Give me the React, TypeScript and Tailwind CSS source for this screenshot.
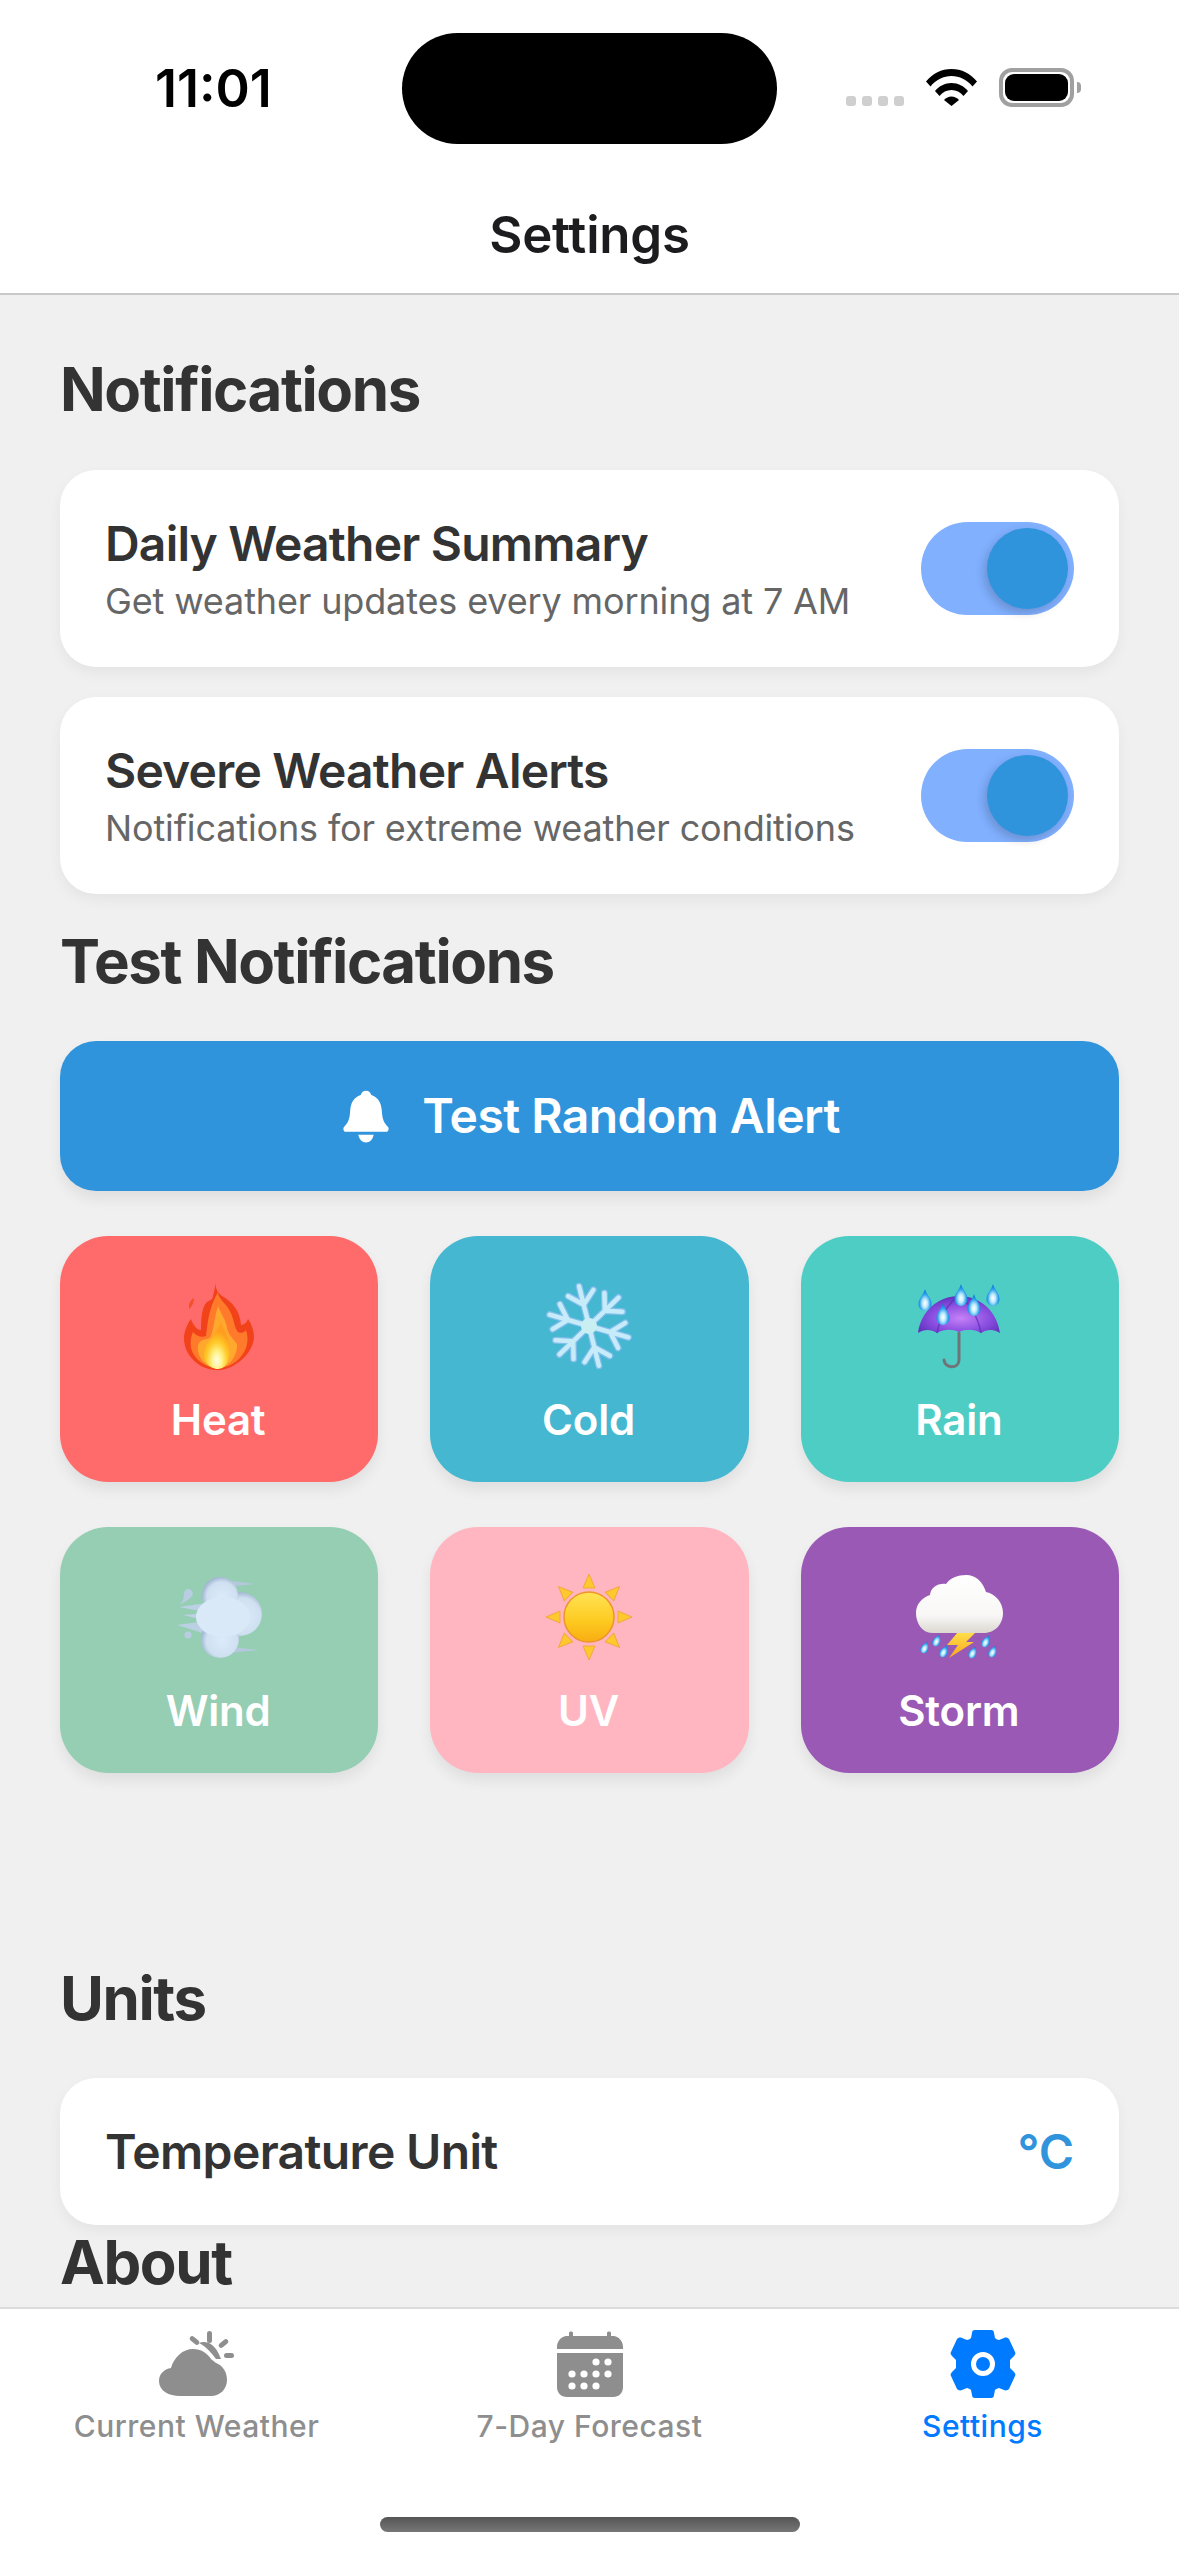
const fontStack = "font-['Inter',sans-serif]";

function Wifi() {
  return (
    <svg width="51" height="37" viewBox="0 0 51 37" fill="#000">
      <path d="M0 12.500C6.500 4.500 15.500 0 25.500 0S44.500 4.500 51 12.500L46.500 17.500C41 10.800 33.500 7 25.500 7S10 10.800 4.500 17.500Z" />
      <path d="M9 22C13 17 19 14 25.500 14S38 17 42 22L37.500 27C34.500 23.300 30.200 21 25.500 21S16.500 23.300 13.500 27Z" />
      <path d="M18 31C20 28.700 22.700 27.500 25.500 27.500S31 28.700 33 31L25.500 37Z" />
    </svg>
  );
}

function Battery() {
  return (
    <div className="flex items-center">
      <div className="flex h-[39px] w-[75px] items-center justify-center rounded-[13px] border-[4px] border-[#a0a0a0]">
        <div className="h-[27px] w-[63px] rounded-[9px] bg-black" />
      </div>
      <div className="ml-[3px] h-[11px] w-[4px] rounded-r-full bg-[#a0a0a0]" />
    </div>
  );
}

function StatusBar() {
  return (
    <div className="relative h-[205px]">
      <span className="absolute left-[155px] top-[59px] text-[52px] font-semibold leading-[60px] text-black">11:01</span>
      <div className="absolute left-[402px] top-[33px] h-[111px] w-[375px] rounded-[56px] bg-black" />
      <div className="absolute left-[846px] top-[96px] flex gap-[6px]">
        <div className="h-[10px] w-[10px] rounded-[3px] bg-[#cfcfcf]" />
        <div className="h-[10px] w-[10px] rounded-[3px] bg-[#cfcfcf]" />
        <div className="h-[10px] w-[10px] rounded-[3px] bg-[#cfcfcf]" />
        <div className="h-[10px] w-[10px] rounded-[3px] bg-[#cfcfcf]" />
      </div>
      <div className="absolute left-[926px] top-[69px]">
        <Wifi />
      </div>
      <div className="absolute left-[999px] top-[68px]">
        <Battery />
      </div>
    </div>
  );
}

function Toggle() {
  return (
    <div className="flex h-[93px] w-[153px] shrink-0 items-center justify-end rounded-full bg-[#81b0ff] pr-[6px]">
      <div className="h-[81px] w-[81px] rounded-full bg-[#3094dd] shadow-[-3px_4px_10px_rgba(0,0,0,0.18)]" />
    </div>
  );
}

function SettingRow({ title, subtitle }: { title: string; subtitle: string }) {
  return (
    <div className="flex h-[197px] items-center justify-between rounded-[36px] bg-white pl-[45px] pr-[45px] shadow-[0_6px_14px_rgba(0,0,0,0.05)]">
      <div className="flex flex-col pt-[3px]">
        <span className="text-[48px] font-semibold leading-[60px] tracking-[-0.8px] text-[#333]">{title}</span>
        <span className="mt-[2px] text-[36px] leading-[50px] tracking-[-0.14px] text-[#666]">{subtitle}</span>
      </div>
      <Toggle />
    </div>
  );
}

function SectionTitle({ children, className }: { children: string; className: string }) {
  return <h2 className={`text-[60px] font-bold leading-[72px] tracking-[-1.4px] text-[#333] ${className}`}>{children}</h2>;
}

function Fire() {
  return (
    <svg width="70" height="88" viewBox="0 0 70 88">
      <defs>
        <radialGradient id="fireCore" cx="0.5" cy="0.82" r="0.62">
          <stop offset="0" stopColor="#fffde8" />
          <stop offset="0.3" stopColor="#fff38a" />
          <stop offset="0.65" stopColor="#ffc928" />
          <stop offset="1" stopColor="#ff9d1e" />
        </radialGradient>
      </defs>
      <path d="M5 24C5 20 8 17 10 16C10 20 8 25 5 27Z" fill="#f4502a" />
      <path d="M32 0C31 6 33 10 38 14C48 20 56 28 57 43C60 43 63 40 64 37C68 42 70 50 70 56C69 66 62 76 52 82C46 86 40 88 34 88C26 88 20 86 14 82C6 76 0 68 0 56C0 50 3 42 7 37C9 43 13 48 17 48C17 36 18 26 22 21C25 18 29 18 29 14C30 10 31 5 32 0Z" fill="#f2421a" />
      <path d="M34 10C34 16 40 20 44 26C50 34 50 46 54 50C58 52 61 50 62 48C64 54 64 60 62 66C58 76 48 86 34 86C22 86 10 78 7 66C6 60 7 54 9 50C12 54 18 56 22 54C24 40 24 28 34 10Z" fill="#ff7a2b" />
      <path d="M34 24C36 30 42 38 43 46C44 52 50 58 53 62C54 72 46 86 34 86C22 86 13 76 14 64C15 58 20 58 26 56C30 48 30 36 34 24Z" fill="#ffa82e" />
      <path d="M37 40C40 48 45 56 46 66C47 76 42 87 34 87C25 87 18 78 20 68C22 60 30 56 37 40Z" fill="url(#fireCore)" />
    </svg>
  );
}

function Snowflake() {
  const arms = [0, 60, 120, 180, 240, 300];
  const arm = "M0 0V-41M0 -22L-13 -34M0 -22L13 -34";
  return (
    <svg width="88" height="88" viewBox="-44 -44 88 88">
      <g transform="rotate(-14)">
        {arms.map((a) => (
          <path key={a} d={arm} transform={`rotate(${a})`} fill="none" stroke="#83bdec" strokeWidth="7" strokeLinecap="round" />
        ))}
        {arms.map((a) => (
          <path key={a} d={arm} transform={`rotate(${a})`} fill="none" stroke="#c6ecfa" strokeWidth="4.500" strokeLinecap="round" />
        ))}
        <circle r="8" fill="#c9eff3" />
      </g>
    </svg>
  );
}

function Drop({ x, y, s = 1, r = 0 }: { x: number; y: number; s?: number; r?: number }) {
  return (
    <path
      transform={`translate(${x} ${y}) rotate(${r}) scale(${s})`}
      d="M0 0C1.500 6 6.500 9 6.500 15C6.500 19 3.500 22 0 22S-6.500 19 -6.500 15C-6.500 9 -1.500 6 0 0Z"
      fill="url(#dropFill)"
    />
  );
}

function Umbrella() {
  return (
    <svg width="84" height="86" viewBox="0 0 84 86">
      <defs>
        <radialGradient id="umbrellaFill" cx="0.52" cy="0.6" r="0.6">
          <stop offset="0" stopColor="#c681f7" />
          <stop offset="0.6" stopColor="#8a4ee0" />
          <stop offset="1" stopColor="#5f31bd" />
        </radialGradient>
        <radialGradient id="dropFill" cx="0.5" cy="0.65" r="0.55">
          <stop offset="0" stopColor="#ffffff" />
          <stop offset="0.35" stopColor="#bdeafc" />
          <stop offset="0.75" stopColor="#2a9fec" />
          <stop offset="1" stopColor="#0f7fdc" />
        </radialGradient>
      </defs>
      <path d="M41 50V77C41 86 27 86 26 77" fill="none" stroke="#707479" strokeWidth="3" strokeLinecap="round" />
      <path d="M0 50C3 28 20 13 41 13S79 28 82 50C76 46 69 46 63 50C56 46 48 46 41 49C34 46 26 46 19 50C13 46 6 46 0 50Z" fill="url(#umbrellaFill)" />
      <path d="M41 13C30 20 22 34 19 50M41 13C52 20 60 34 63 50" stroke="#5a2fb4" strokeWidth="1.500" fill="none" opacity="0.7" />
      <Drop x={7} y={6} />
      <Drop x={43} y={1} />
      <Drop x={75} y={1} />
      <Drop x={56} y={11} />
      <Drop x={25} y={20} />
    </svg>
  );
}

function WindCloud() {
  return (
    <svg width="85" height="81" viewBox="0 0 85 81">
      <defs>
        <radialGradient id="puffFill" cx="0.55" cy="0.55" r="0.55">
          <stop offset="0" stopColor="#dcebfa" />
          <stop offset="0.75" stopColor="#cfe0f1" />
          <stop offset="1" stopColor="#a3b7d2" />
        </radialGradient>
      </defs>
      <path d="M48 3L78 7L50 10ZM55 70L82 73L52 76Z" fill="#b4c8dc" />
      <path d="M2 30L30 26L34 36ZM0 48L30 44L32 58ZM6 38L30 36L30 44Z" fill="#bcd0e4" />
      <path d="M11 12C15 12 17 16 15 19C13 22 8 25 2 28C6 25 7 21 7 17C7 14 9 12 11 12Z" fill="#b9cde2" />
      <circle cx="11" cy="58" r="3.500" fill="#b9cde2" />
      <circle cx="63" cy="37" r="22" fill="url(#puffFill)" />
      <circle cx="43" cy="18" r="18" fill="url(#puffFill)" />
      <circle cx="43" cy="62" r="19" fill="url(#puffFill)" />
      <ellipse cx="46" cy="40" rx="27" ry="20" fill="#d9e9f8" />
    </svg>
  );
}

function Sun() {
  const rays = [0, 45, 90, 135, 180, 225, 270, 315];
  return (
    <svg width="88" height="88" viewBox="-44 -44 88 88">
      <defs>
        <linearGradient id="sunFill" x1="0" y1="0" x2="0" y2="1">
          <stop offset="0" stopColor="#ffe455" />
          <stop offset="0.6" stopColor="#fdc91f" />
          <stop offset="1" stopColor="#f8ad12" />
        </linearGradient>
      </defs>
      {rays.map((a) => (
        <path key={a} transform={`rotate(${a})`} d="M-6 -29L0 -43L6 -29Z" fill="#fdc92f" stroke="#f3a83c" strokeWidth="1" />
      ))}
      <circle r="25" fill="url(#sunFill)" stroke="#ef942b" strokeWidth="1.500" />
    </svg>
  );
}

function StormCloud() {
  return (
    <svg width="88" height="84" viewBox="0 0 88 84">
      <defs>
        <linearGradient id="stormFill" x1="0" y1="0" x2="0" y2="1">
          <stop offset="0" stopColor="#ffffff" />
          <stop offset="0.7" stopColor="#f8f7f6" />
          <stop offset="1" stopColor="#dcd8d0" />
        </linearGradient>
        <linearGradient id="boltFill" x1="0" y1="0" x2="0" y2="1">
          <stop offset="0" stopColor="#ffe14a" />
          <stop offset="1" stopColor="#f9a51c" />
        </linearGradient>
      </defs>
      <path d="M42 57H60L50 67H58L33 83L42 70H31Z" fill="url(#boltFill)" />
      <path d="M16 58C6 58 0 48 0 38C0 30 5 23 14 20C15 12 22 8 30 9C34 3 42 0 50 0C60 0 67 7 70 17C80 19 87 28 87 38C87 49 79 58 68 58Z" fill="url(#stormFill)" />
      <Drop x={12} y={66} s={0.6} r={25} />
      <Drop x={24} y={59} s={0.6} r={25} />
      <Drop x={31} y={70} s={0.6} r={25} />
      <Drop x={60} y={71} s={0.6} r={25} />
      <Drop x={73} y={60} s={0.6} r={25} />
      <Drop x={80} y={70} s={0.6} r={25} />
    </svg>
  );
}

function AlertTile({ label, color, children }: { label: string; color: string; children: React.ReactNode }) {
  return (
    <div className={`flex h-[246px] flex-col items-center rounded-[48px] pt-[42px] shadow-[0_8px_14px_rgba(0,0,0,0.07)] ${color}`}>
      <div className="flex h-[96px] items-center justify-center">{children}</div>
      <span className="mt-[21px] pr-[2px] text-[42px] font-semibold leading-[50px] tracking-[-0.2px] text-white">{label}</span>
    </div>
  );
}

function Bell() {
  return (
    <svg width="46" height="53" viewBox="0 0 48 54" fill="#fff">
      <path d="M24 0C27 0 29 2 29.500 4.500C37 7 40 13 40.500 21C41 30 43 34 47 38C48 39 48 43 45 43H3C0 43 0 39 1 38C5 34 7 30 7.500 21C8 13 11 7 18.500 4.500C19 2 21 0 24 0Z" />
      <path d="M16 46H32C31 51 28 54 24 54S17 51 16 46Z" />
    </svg>
  );
}

function WeatherIcon() {
  return (
    <svg width="75" height="66" viewBox="0 0 75 66" fill="#8e8e8e">
      <path d="M21 65C10 65 0 60 0 50C0 42 6 38 12 37C15 26 24 18 34 18C42 18 48 22 52 28L57 32C63 34 68 40 68 49C68 58 61 65 52 65H21Z" />
      <path d="M40 12C44 10 50 11 53 14C58 18 60 23 62 28L57 28C52 21 46 15 40 12Z" />
      <rect x="48" y="0" width="5" height="12" rx="2.500" />
      <rect x="33" y="4" width="5" height="11" rx="2.500" transform="rotate(-50 35.500 9.500)" />
      <rect x="62" y="7" width="5" height="11" rx="2.500" transform="rotate(50 64.500 12.500)" />
      <rect x="65" y="22" width="10" height="5" rx="2.500" />
    </svg>
  );
}

function CalendarIcon() {
  return (
    <svg width="66" height="66" viewBox="0 0 66 66" fill="#8e8e8e">
      <path d="M0 16C0 10 4 6 9 5H12V2C12 0 16 0 16 2V5H50V2C50 0 54 0 54 2V5H57C62 6 66 10 66 16V18H0Z" />
      <path d="M0 22H66V56C66 62 62 66 56 66H10C4 66 0 62 0 56Z" />
      <g fill="#fff">
        <circle cx="39" cy="31" r="3.600" />
        <circle cx="51" cy="31" r="3.600" />
        <circle cx="15" cy="43" r="3.600" />
        <circle cx="27" cy="43" r="3.600" />
        <circle cx="39" cy="43" r="3.600" />
        <circle cx="51" cy="43" r="3.600" />
        <circle cx="15" cy="55" r="3.600" />
        <circle cx="27" cy="55" r="3.600" />
        <circle cx="39" cy="55" r="3.600" />
      </g>
    </svg>
  );
}

function GearIcon() {
  return (
    <svg width="66" height="68" viewBox="0 0 66 68">
      <path
        fill="#007aff"
        d="M25 0H41C43 0 44 1 44 3L45 8C46 9 48 10 49 10L54 8C56 7 58 8 59 9L65 22C66 23 65 25 64 26L60 30C60 32 60 36 60 38L64 42C65 43 66 45 65 46L59 59C58 60 56 61 54 60L49 58C48 58 46 59 45 60L44 65C44 67 43 68 41 68H25C23 68 22 67 22 65L21 60C20 59 18 58 17 58L12 60C10 61 8 60 7 59L1 46C0 45 1 43 2 42L6 38C6 36 6 32 6 30L2 26C1 25 0 23 1 22L7 9C8 8 10 7 12 8L17 10C18 10 20 9 21 8L22 3C22 1 23 0 25 0Z"
      />
      <circle cx="33" cy="34" r="9.500" fill="#007aff" stroke="#fff" strokeWidth="5" />
    </svg>
  );
}

function TabItem({ label, active, children }: { label: string; active?: boolean; children: React.ReactNode }) {
  return (
    <div className="flex flex-1 flex-col items-center">
      <div className="flex h-[68px] items-center justify-center">{children}</div>
      <span className={`mt-[10px] text-[30px] font-medium leading-[36px] tracking-[0.5px] ${active ? "text-[#007aff]" : "text-[#8e8e8e]"}`}>
        {label}
      </span>
    </div>
  );
}

export default function App() {
  return (
    <div className={`flex h-[2556px] w-[1179px] flex-col overflow-hidden bg-white ${fontStack}`}>
      {/* status bar + nav header */}
      <header className="h-[295px] shrink-0 border-b-[2px] border-[#c8c8c8] bg-white">
        <StatusBar />
        <div className="text-center text-[51px] font-semibold leading-[60px] tracking-[-0.2px] text-[#1c1c1e]">Settings</div>
      </header>

      <main className="flex min-h-0 flex-1 flex-col overflow-hidden bg-[#f0f0f0] px-[60px]">
        <SectionTitle className="mt-[58px]">Notifications</SectionTitle>
        <div className="mt-[45px] flex flex-col gap-[30px]">
          <SettingRow title="Daily Weather Summary" subtitle="Get weather updates every morning at 7 AM" />
          <SettingRow title="Severe Weather Alerts" subtitle="Notifications for extreme weather conditions" />
        </div>

        <SectionTitle className="mt-[31px]">Test Notifications</SectionTitle>
        <div className="mt-[44px] flex h-[150px] items-center justify-center gap-[33px] rounded-[36px] bg-[#3094dd] pl-[4px] shadow-[0_8px_14px_rgba(0,0,0,0.07)]">
          <Bell />
          <span className="text-[48px] font-semibold leading-[60px] tracking-[-0.55px] text-white">Test Random Alert</span>
        </div>
        <div className="mt-[45px] grid grid-cols-3 gap-x-[52px] gap-y-[45px]">
          <AlertTile label="Heat" color="bg-[#ff6b6b]"><Fire /></AlertTile>
          <AlertTile label="Cold" color="bg-[#45b7d1]"><Snowflake /></AlertTile>
          <AlertTile label="Rain" color="bg-[#4ecdc4]"><Umbrella /></AlertTile>
          <AlertTile label="Wind" color="bg-[#96ceb4]"><WindCloud /></AlertTile>
          <AlertTile label="UV" color="bg-[#ffb6c1]"><Sun /></AlertTile>
          <AlertTile label="Storm" color="bg-[#9b59b6]"><StormCloud /></AlertTile>
        </div>

        <SectionTitle className="mt-[189px]">Units</SectionTitle>
        <div className="mt-[44px] flex h-[147px] shrink-0 items-center justify-between rounded-[36px] bg-white pl-[45px] pr-[45px] shadow-[0_6px_14px_rgba(0,0,0,0.05)]">
          <span className="text-[48px] font-semibold leading-[60px] tracking-[-0.65px] text-[#333]">Temperature Unit</span>
          <span className="text-[48px] font-semibold leading-[60px] text-[#3094dd]">°C</span>
        </div>
        <SectionTitle className="mt-[1px]">About</SectionTitle>
      </main>

      {/* bottom tabs */}
      <nav className="relative h-[249px] shrink-0 border-t-[2px] border-[#dcdcdc] bg-white pt-[21px]">
        <div className="flex">
          <TabItem label="Current Weather"><WeatherIcon /></TabItem>
          <TabItem label="7-Day Forecast"><CalendarIcon /></TabItem>
          <TabItem label="Settings" active><GearIcon /></TabItem>
        </div>
        <div className="absolute bottom-[24px] left-[380px] h-[15px] w-[420px] rounded-full bg-gradient-to-b from-[#555] to-[#777]" />
      </nav>
    </div>
  );
}
